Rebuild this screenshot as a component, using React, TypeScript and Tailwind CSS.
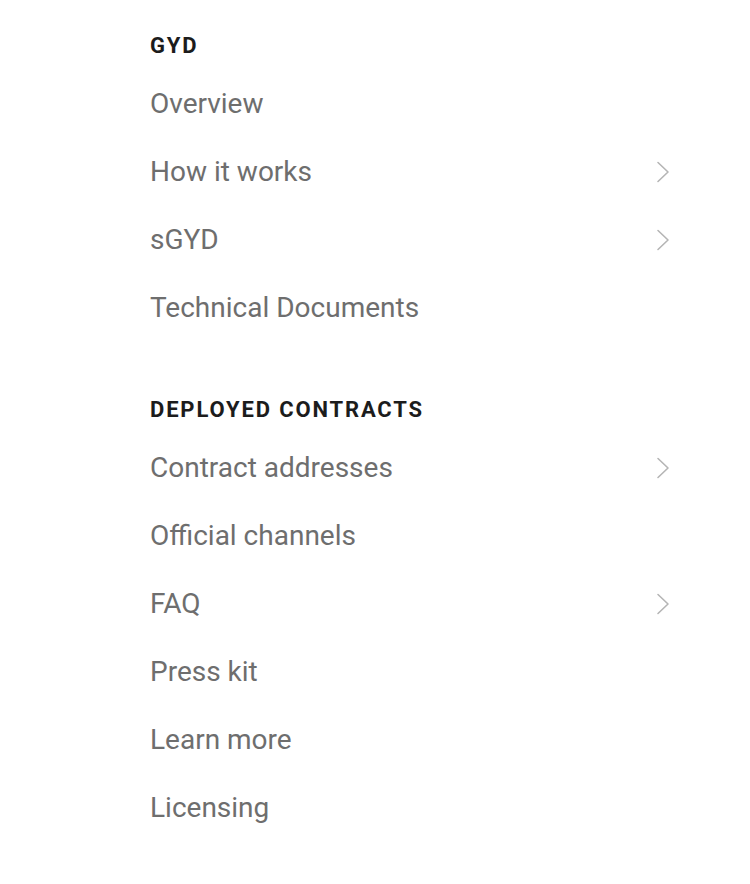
const sections = [
  {
    title: "GYD",
    items: [
      { label: "Overview" },
      { label: "How it works", more: true },
      { label: "sGYD", more: true },
      { label: "Technical Documents" },
    ],
  },
  {
    title: "DEPLOYED CONTRACTS",
    items: [
      { label: "Contract addresses", more: true },
      { label: "Official channels" },
      { label: "FAQ", more: true },
      { label: "Press kit" },
      { label: "Learn more" },
      { label: "Licensing" },
    ],
  },
];

const Chevron = () => (
  <svg width="14" height="22" viewBox="0 0 14 22" fill="none" className="text-[#b5b5b5]">
    <path d="M2 1.5 L12 11 L2 20.5" stroke="currentColor" strokeWidth="1.6" strokeLinecap="round" strokeLinejoin="round" />
  </svg>
);

const App = () => {
  return (
    <div className="min-h-screen bg-white font-['Roboto',sans-serif] pl-[150px] pr-[80px] pt-[20px]">
      {sections.map((section, i) => (
        <div key={section.title} className={i > 0 ? "mt-[42px]" : ""}>
          <div className="h-[50px] flex items-center text-[22px] font-bold tracking-[1.85px] text-[#1c1c1c]">
            {section.title}
          </div>
          <ul>
            {section.items.map((item) => (
              <li key={item.label} className="h-[68px] flex items-center justify-between text-[28px] text-[#6e6e6e]">
                <span>{item.label}</span>
                {item.more && <Chevron />}
              </li>
            ))}
          </ul>
        </div>
      ))}
    </div>
  );
};

export default App;
